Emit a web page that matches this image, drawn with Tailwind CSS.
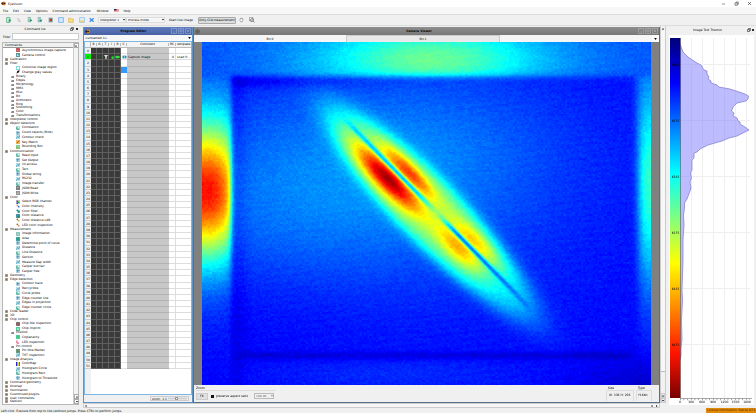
<!DOCTYPE html>
<html lang="en">
<head>
<meta charset="utf-8">
<title>EyeVision</title>
<script src="https://cdn.jsdelivr.net/npm/@tailwindcss/browser@4"></script>
</head>
<body class="h-screen overflow-hidden flex flex-col bg-[#f0f0f0] text-black text-[3px] leading-[4px] font-['DejaVu_Sans',sans-serif] whitespace-nowrap cursor-default">

<header class="shrink-0">
  <div class="h-[7px] bg-white flex items-center px-[1px] gap-[2px]">
    <svg class="w-[5px] h-[5px]" viewBox="0 0 10 10"><ellipse cx="6" cy="5" rx="4" ry="4" fill="#f08a1c"/><circle cx="3" cy="5" r="2.4" fill="#5a2a10"/><circle cx="7" cy="5" r="1.5" fill="#222"/></svg>
    <h1>EyeVision</h1>
    <div class="ml-auto flex gap-[8px] pr-[3px]">
      <button aria-label="Minimize"><svg class="w-[5px] h-[5px]" viewBox="0 0 5 5"><path d="M1 3h3" stroke="#555" stroke-width=".6"/></svg></button>
      <button aria-label="Restore"><svg class="w-[5px] h-[5px]" viewBox="0 0 5 5" fill="none" stroke="#444" stroke-width=".6"><path d="M1 2h2.300v2.300H1zM2 2V1h2.300v2.300H3.300"/></svg></button>
      <button aria-label="Close"><svg class="w-[5px] h-[5px]" viewBox="0 0 5 5"><path d="M1 1l3 3M4 1L1 4" stroke="#333" stroke-width=".6"/></svg></button>
    </div>
  </div>
  <nav class="h-[7px] bg-[#f7f7f7] flex items-center pl-[3px] gap-[5px]">
    <button>File</button><button>Edit</button><button>View</button><button>Options</button><button>Command administration</button><button class="pl-[1px]">Window</button>
    <button aria-label="Language"><svg class="w-[5px] h-[3px]" viewBox="0 0 10 6"><path fill="#fff" d="M0 0h10v6H0z"/><path d="M0 .5h10M0 2.500h10M0 4.500h10" stroke="#d22"/><path fill="#225" d="M0 0h5v3H0z"/></svg></button>
    <button>Help</button>
  </nav>
  <div class="h-[12px] border-y border-[#dcdcdc] bg-[#f0f0f0] flex items-center pl-[6px]">
    <div id="tools" class="flex w-[91px] justify-between pr-[2px]"></div>
    <div class="relative ml-[1px]">
      <select aria-label="Interpreter" class="appearance-none block w-[28px] h-[6px] px-[1px] bg-[#f6f6f6] border border-[#ddd] leading-[3px]"><option>Interpreter 1</option></select>
      <svg class="absolute right-[1px] top-[2px] w-[2px] h-[2px] pointer-events-none" viewBox="0 0 4 4"><path d="M0 0h4L2 3z"/></svg>
    </div>
    <div class="relative">
      <select aria-label="Mode" class="appearance-none block w-[39px] h-[6px] px-[1px] bg-[#f6f6f6] border border-[#ddd] leading-[3px]"><option>Process mode</option></select>
      <svg class="absolute right-[1px] top-[2px] w-[2px] h-[2px] pointer-events-none" viewBox="0 0 4 4"><path d="M0 0h4L2 3z"/></svg>
    </div>
    <button class="ml-[3px] w-[26px]">Start live image</button>
    <button class="ml-[4px] w-[38px] h-[7px] leading-[4px] bg-[#dedede] border border-[#aaa] rounded-[1px]">Only CLK-measurement</button>
    <button aria-label="Pan" class="ml-[3px]"><svg class="w-[5px] h-[6px]" viewBox="0 0 5 6"><path d="M1 4V2l.6-.6.4.6.3-1 .6.2.2.8.6-.4V4L3 5H2z" fill="#fff" stroke="#666" stroke-width=".5"/></svg></button>
    <button aria-label="Zoom region" class="ml-[5px]"><svg class="w-[6px] h-[6px]" viewBox="0 0 6 6" fill="none" stroke="#555" stroke-width=".6"><rect x=".5" y=".5" width="3.500" height="3.500" stroke-dasharray=".8 .5"/><circle cx="3" cy="3" r="1.500"/><path d="M4 4l1.600 1.600"/></svg></button>
  </div>
</header>

<main class="flex-1 min-h-0 flex">
  <!-- Command list dock -->
  <aside class="w-[83px] shrink-0 flex flex-col pr-[4px]">
    <div class="h-[6px] flex items-center">
      <h2 class="flex-1 text-center">Command list</h2>
      <button aria-label="Float"><svg class="w-[4px] h-[4px]" viewBox="0 0 4 4"><path d="M.5 1.500h2v2h-2zM1.500 1.500v-1h2v2h-1" fill="none" stroke="#222" stroke-width=".6"/></svg></button>
      <button aria-label="Close list" class="ml-[1px]"><svg class="w-[4px] h-[4px]" viewBox="0 0 4 4"><path d="M1 1l2 2M3 1L1 3" stroke="#000" stroke-width=".8"/></svg></button>
    </div>
    <div class="flex items-center h-[9px] pl-[3px]">
      <label for="filter" class="w-[9px]">Filter</label>
      <input id="filter" class="flex-1 min-w-0 h-[7px] bg-white border border-[#ccc]">
    </div>
    <div class="flex-1 min-h-0 flex mt-[1px] mb-[3px] ml-[2px] border border-[#b8b8b8] bg-white">
      <div class="flex-1 min-w-0 flex flex-col">
        <div class="h-[5px] shrink-0 bg-[#f0f0f0] border-b border-[#999] pl-[2px] leading-[4px]">Commands</div>
        <ul id="tree" class="flex-1 min-h-0 flex flex-col leading-[3px]"></ul>
      </div>
      <div class="w-[5px] bg-[#f3f3f3] border-l border-[#ccc] flex flex-col justify-between items-center">
        <button aria-label="Scroll list up" class="w-[5px] h-[5px] border border-[#aaa] bg-white grid place-items-center"><svg class="w-[2px] h-[2px]" viewBox="0 0 4 4"><path d="M0 3h4L2 0z"/></svg></button>
        <div class="w-full">
          <button aria-label="Scroll list back" class="w-[5px] h-[5px] border border-[#aaa] bg-white grid place-items-center"><svg class="w-[2px] h-[2px]" viewBox="0 0 4 4"><path d="M0 3h4L2 0z"/></svg></button>
          <button aria-label="Scroll list down" class="w-[5px] h-[5px] border border-[#aaa] bg-white grid place-items-center"><svg class="w-[2px] h-[2px]" viewBox="0 0 4 4"><path d="M0 0h4L2 3z"/></svg></button>
        </div>
      </div>
    </div>
  </aside>

  <!-- Window area with its scroll bars -->
  <div class="flex-1 min-w-0 flex flex-col">
    <div class="flex-1 min-h-0 flex">
      <div class="flex-1 min-w-0 flex pt-[1px]">
        <!-- Program editor -->
        <section class="w-[110px] shrink-0 flex flex-col border-x border-b border-[#5e93c4] bg-[#f0f0f0]">
          <div class="h-[8px] shrink-0 bg-linear-to-b from-[#5f7cbc] to-[#4763a6] flex items-center pl-[1px] pr-[1px]">
            <svg class="w-[5px] h-[5px]" viewBox="0 0 10 10"><ellipse cx="6" cy="5" rx="4" ry="4" fill="#f08a1c"/><circle cx="3" cy="5" r="2.400" fill="#222"/><circle cx="7" cy="5" r="1.500" fill="#222"/></svg>
            <h2 class="flex-1 text-center font-bold pl-[6px]">Program Editor</h2>
            <div class="flex gap-[1px]">
              <button aria-label="Minimize editor"><svg class="w-[6px] h-[6px]" viewBox="0 0 6 6" fill="none" stroke="#a9b9dd" stroke-width=".5"><path d="M.5 .5h5v5h-5zM2 4h2"/></svg></button>
              <button aria-label="Maximize editor"><svg class="w-[6px] h-[6px]" viewBox="0 0 6 6" fill="none" stroke="#a9b9dd" stroke-width=".5"><path d="M.5 .5h5v5h-5zM2 2h2v2H2z"/></svg></button>
              <button aria-label="Close editor"><svg class="w-[6px] h-[6px]" viewBox="0 0 6 6" fill="none" stroke="#a9b9dd" stroke-width=".5"><path d="M.5 .5h5v5h-5zM2 2l2 2M4 2L2 4"/></svg></button>
            </div>
          </div>
          <div class="h-[6px] shrink-0 relative bg-[#f8f8f8]">
            <select aria-label="Program" class="appearance-none block w-full h-[6px] pl-[1px]"><option>&lt;unnamed 1&gt;</option></select>
            <svg class="absolute right-[1px] top-[2px] w-[3px] h-[2px] pointer-events-none" viewBox="0 0 4 3"><path d="M0 0h4L2 3z"/></svg>
          </div>
          <div class="flex-1 min-h-0 flex flex-col bg-white border border-[#7db6e2]">
            <table class="w-full grow-[329] basis-0 min-h-0 leading-[3px] flex flex-col">
              <thead class="block h-[6px] shrink-0 bg-[#f4f4f4]"><tr class="flex h-full items-center text-center divide-x divide-[#bbb] border-b border-[#bbb]">
                <th class="w-[6px] h-full"></th><th class="w-[6px] font-normal">B</th><th class="w-[6px] font-normal">G</th><th class="w-[6px] font-normal">T</th><th class="w-[6px] font-normal">I</th><th class="w-[6px] font-normal">R</th><th class="w-[6px] font-normal">C</th><th class="w-[42px] font-normal">Comment</th><th class="w-[7px] font-normal">RC</th><th class="flex-1 min-w-0 overflow-hidden font-normal">Template</th>
              </tr></thead>
              <tbody id="rows" class="flex-1 min-h-0 flex flex-col"></tbody>
            </table>
            <div class="grow-[25] basis-0 flex"><div class="w-[6px] bg-[#f0f0f0]"></div></div>
          </div>
          <div class="h-[7px] shrink-0 flex items-center justify-end pr-[3px]">
            <div class="flex items-center h-[5px] border border-[#ccc] px-[1px] gap-[1px]">
              <label for="zoomr">zoom: 1:1</label>
              <input id="zoomr" type="range" class="appearance-none w-[19px] h-[3px] bg-linear-to-b from-[#f0f0f0] via-[#ccc] to-[#f0f0f0] [&::-webkit-slider-thumb]:appearance-none [&::-webkit-slider-thumb]:w-[3px] [&::-webkit-slider-thumb]:h-[3px] [&::-webkit-slider-thumb]:bg-white [&::-webkit-slider-thumb]:border [&::-webkit-slider-thumb]:border-[#999]" value="45">
            </div>
          </div>
        </section>

        <!-- Camera viewer -->
        <section class="flex-1 min-w-0 flex flex-col border-x border-b border-[#54708e] bg-[#f0f0f0]">
          <div class="h-[8px] shrink-0 bg-linear-to-b from-[#8e8e8e] to-[#787878] flex items-center px-[1px]">
            <svg class="w-[5px] h-[5px]" viewBox="0 0 5 5" fill="none" stroke="#444" stroke-width=".6"><rect x=".8" y=".8" width="3.400" height="3.400" rx="1"/><circle cx="2.500" cy="2.500" r=".7"/></svg>
            <h2 class="flex-1 text-center font-bold">Camera Viewer</h2>
            <div class="flex gap-[1px]">
              <button aria-label="Minimize viewer"><svg class="w-[6px] h-[6px]" viewBox="0 0 6 6" fill="none" stroke="#bbb" stroke-width=".5"><path d="M.5 .5h5v5h-5zM2 4h2"/></svg></button>
              <button aria-label="Maximize viewer"><svg class="w-[6px] h-[6px]" viewBox="0 0 6 6" fill="none" stroke="#bbb" stroke-width=".5"><path d="M.5 .5h5v5h-5zM2 2h2v2H2z"/></svg></button>
              <button aria-label="Close viewer"><svg class="w-[6px] h-[6px]" viewBox="0 0 6 6" fill="none" stroke="#bbb" stroke-width=".5"><path d="M.5 .5h5v5h-5zM2 2l2 2M4 2L2 4"/></svg></button>
            </div>
          </div>
          <div class="h-[7px] shrink-0 flex bg-[#f6f6f6] text-center leading-[6px]">
            <button class="flex-1">Bit 0</button><button class="flex-1 bg-[#e9e9e9] border-x border-t border-[#ccc]">Bit 1</button><div class="flex-1"></div>
            <button aria-label="More tabs" class="w-[7px] grid place-items-center bg-white"><svg class="w-[3px] h-[2px]" viewBox="0 0 4 3"><path d="M0 0h4L2 3z"/></svg></button>
          </div>
          <div class="flex-1 min-h-0 bg-[#808080] px-[8px] flex"><canvas id="heat" width="450" height="343" class="block flex-1 min-w-0 w-full h-full" role="img" aria-label="Thermal image"></canvas></div>
          <div class="h-[17px] shrink-0 flex justify-between px-[2px] pt-[1px]">
            <fieldset class="w-[80px]"><legend class="leading-[4px]">Zoom</legend>
              <div class="flex items-center border-t border-[#ddd] h-[11px]">
                <button class="w-[12px] h-[7px] bg-[#e0e0e0] border border-[#ccc] leading-[4px]">Fit</button>
                <input id="par" type="checkbox" checked class="appearance-none ml-[3px] w-[3px] h-[3px] bg-[#111]">
                <label for="par" class="ml-[2px] w-[38px]">preserve aspect ratio</label>
                <div class="relative">
                  <select aria-label="Zoom factor" class="appearance-none block w-[20px] h-[6px] border border-[#bbb] px-[1px] text-[#666] leading-[3px]"><option>100.00</option></select>
                  <svg class="absolute right-[1px] top-[2px] w-[2px] h-[2px] pointer-events-none" viewBox="0 0 4 4"><path d="M0 0h4L2 3z" fill="#777"/></svg>
                </div>
              </div>
            </fieldset>
            <div class="flex pr-[5px] gap-[2px]">
              <dl class="w-[28px]"><dt class="pl-[2px]">Size</dt><dd class="border-x border-t border-[#ddd] h-[11px] leading-[9px] pl-[2px]">W: 336 H: 256</dd></dl>
              <dl class="w-[16px]"><dt class="pl-[2px]">Type</dt><dd class="border-x border-t border-[#ddd] h-[11px] leading-[9px] pl-[1px]">Y16bit</dd></dl>
            </div>
          </div>
        </section>
      </div>
      <div class="w-[6px] shrink-0 flex flex-col items-center bg-[#f2f2f2] border-x border-[#ccc]">
        <button aria-label="Scroll up" class="w-[5px] h-[5px] grid place-items-center"><svg class="w-[2px] h-[2px]" viewBox="0 0 4 4"><path d="M0 3h4L2 0z"/></svg></button>
        <div class="w-[4px] flex-1 bg-[#f7f7f7] mb-[21px] border-b border-[#bbb]"></div>
        <button aria-label="Scroll back" class="w-[4px] h-[5px] border border-[#ccc] grid place-items-center"><svg class="w-[2px] h-[2px]" viewBox="0 0 4 4"><path d="M0 3h4L2 0z"/></svg></button>
        <button aria-label="Scroll down" class="w-[4px] h-[5px] border border-[#ccc] grid place-items-center"><svg class="w-[2px] h-[2px]" viewBox="0 0 4 4"><path d="M0 0h4L2 3z"/></svg></button>
      </div>
    </div>
    <div class="h-[5px] shrink-0 flex items-center mr-[6px] border border-[#ccc] bg-[#f7f7f7] px-[1px]">
      <button aria-label="Scroll left" class="h-[3px]"><svg class="w-[2px] h-[2px]" viewBox="0 0 4 4"><path d="M3 0v4L0 2z"/></svg></button>
      <div class="flex-1"></div>
      <button aria-label="Scroll further left" class="h-[3px] mr-[3px]"><svg class="w-[2px] h-[2px]" viewBox="0 0 4 4"><path d="M3 0v4L0 2z"/></svg></button>
      <button aria-label="Scroll right" class="h-[3px]"><svg class="w-[2px] h-[2px]" viewBox="0 0 4 4"><path d="M0 0v4l3-2z"/></svg></button>
    </div>
  </div>

  <!-- Image tool dock -->
  <aside class="w-[90px] shrink-0 flex flex-col pl-[2px]">
    <div class="h-[6px] mt-[1px] flex items-center pr-[1px]">
      <h2 class="flex-1 text-center">Image Tool Thermo</h2>
      <button aria-label="Float tool"><svg class="w-[4px] h-[4px]" viewBox="0 0 4 4"><path d="M.5 1.500h2v2h-2zM1.500 1.500v-1h2v2h-1" fill="none" stroke="#222" stroke-width=".6"/></svg></button>
      <button aria-label="Close tool"><svg class="w-[4px] h-[4px]" viewBox="0 0 4 4"><path d="M1 1l2 2M3 1L1 3" stroke="#000" stroke-width=".8"/></svg></button>
    </div>
    <svg id="hist" class="flex-1 min-h-0 w-full" viewBox="668 33 88 375" preserveAspectRatio="none" font-size="3" font-family="DejaVu Sans, sans-serif">
      <defs><linearGradient id="jet" x1="0" y1="0" x2="0" y2="1"><stop offset="0" stop-color="#00007a"/><stop offset=".125" stop-color="#0000ff"/><stop offset=".375" stop-color="#00ffff"/><stop offset=".625" stop-color="#ffff00"/><stop offset=".875" stop-color="#ff1400"/><stop offset="1" stop-color="#780000"/></linearGradient></defs>
      <path d="M669 35h85v370h-85z" fill="#fff"/>
      <path d="M691.500 38v360M702.500 38v360M713.500 38v360M724.500 38v360M735.500 38v360M746.500 38v360M680 64.500h70M680 120.500h70M680 176.500h70M680 232.500h70M680 288.500h70M680 344.500h70" stroke="#efefef" fill="none"/>
      <path d="M680 44L683 52 688 57 697 63 701 65 704 70 707 71 707 74 709 77 708 79 711 81 711 83 717 85 719 87 730 89 745 94 748.500 96 748 99 746 101 737 103 733 107 731.500 111 734 113 733 116 737 118 738 121 740 122 740 124 745 127 749 130 743 133 737 136 729 138 722 141 708 145 700 149 697 152 694 153 694 158 692 160 692 170 690.500 173 691.500 178 690 182 691 188 690 191 687 199 684.500 203 684.500 208 683.500 215 684 225 683 240 683 260 682 290 682.500 300 681.500 320 682 340 681 348 681 356 680 360z" fill="#bcbcff" stroke="#7d78c8" stroke-width=".7"/>
      <path d="M691.500 66v92M702.500 70v75M713.500 85v57M724.500 89v49M735.500 92v12M735.500 120v15M680 64.500h20M680 120.500h58M680 176.500h11" stroke="#b0b0f2" fill="none" stroke-width=".7"/>
      <rect x="670" y="38" width="10.500" height="360" fill="url(#jet)"/>
      <path d="M680.500 38v360M680 398.500h72" stroke="#555" stroke-width=".5"/>
      <path d="M680 399.500h70" stroke="#555" stroke-width="1.500" stroke-dasharray=".5 3.170"/>
      <g fill="#000" text-anchor="middle"><text x="675.500" y="66">6225</text><text x="675.500" y="122">6275</text><text x="675.500" y="178">6325</text><text x="675.500" y="234">6375</text><text x="675.500" y="290">6425</text><text x="675.500" y="346">6475</text>
      <text x="680" y="403">0</text><text x="691" y="403">300</text><text x="702" y="403">600</text><text x="713" y="403">900</text><text x="724.500" y="403">1200</text><text x="735.500" y="403">1500</text><text x="747" y="403">1800</text></g>
    </svg>
  </aside>
</main>

<footer class="h-[5px] shrink-0 flex items-center justify-between">
  <p class="pl-[1px]">Left click: Execute from top to line (without jumps. Press CTRL to perform jumps.</p>
  <p class="bg-[#e08a0a] w-[50px] h-[5px] pl-[1px] text-[#5a3000] overflow-hidden">License information: Status 07.12</p>
</footer>

<script>
const svg = (cls, box, body) => `<svg class="${cls}" viewBox="0 0 ${box} ${box}">${body}</svg>`;

// Toolbar
const tools = [
  ['Start', '<path d="M1 1h5v7H1z" fill="#dff5e8" stroke="#2c9a6a"/><path d="M4 3l4 2-4 3z" fill="#18a05a"/>'],
  ['Stop', '<path d="M2 2l5 5" stroke="#c8c8c8" stroke-width="2"/><path d="M2 6h4" stroke="#d8c0c0"/>'],
  ['Step into', '<path d="M1 1h5M1 3h5M1 5h5M1 7h5" stroke="#4b9a7e"/><path d="M5 3l3 2-3 2z" fill="#0d8a56"/>'],
  ['Step over', '<path d="M1 1h5M1 3h5M1 5h5M1 7h5" stroke="#4b8a9e"/><path d="M4 4h4l-2 4z" fill="#0d9a56"/>'],
  ['Break', '<path d="M1 1h6v7H1z" fill="#7a9c94"/><path d="M3 3h3v3H3z" fill="#b33"/>'],
  ['New', '<path d="M1 1h7v7H1z" fill="#d8ecff" stroke="#4c9ae8"/>'],
  ['Open', '<path d="M1 2h3l1 1h3v5H1z" fill="#f7e08a" stroke="#d8b040"/>'],
  ['Save', '<path d="M1 1h7v7H1z" fill="#e8f2fc" stroke="#78b0e8"/><path d="M2 5h5v3H2z" fill="#f0d060"/>'],
  ['Settings', '<path d="M1 2l6 5M7 2L1 7" stroke="#3a8de8" stroke-width="2"/>']];
document.getElementById('tools').innerHTML = tools.map(([n, b]) => `<button aria-label="${n}">${svg('w-[6px] h-[6px]', 9, b)}</button>`).join('');

// Command tree: "=" category, "+" sub-category, otherwise a command
const tree = 'Asynchronous image capture|Camera control|=Calibration|=Filter|Convolve image region|Change gray values|+Binary|+Edges|+Morphology|+MMX|+Misc|+Bit|+Arithmetic|+Ring|+Smoothing|+Color|+Transformations|=Interpreter control|=Object detection|Correlation|Count objects (Blob)|Contour check|Key Match|Bounding Box|=Communication|Read input|Set Output|I/o access|Text|Global string|RS232|Image transfer|JSON Read|JSON Write|=Color|Select RGB channel|Color intensity|Color filter|Color distance|Color distance LAB|LED color inspection|=Measurement|Image information|Area|Determine point of curve|Distance|Line Distance|Section|Measure Gap width|Caliper burr/air|Caliper free|=Geometry|=Edge detection|Contour trace|Rect probe|Circle probe|Edge counter line|Edges in projection|Edge counter circle|=Code reader|=3D|=Chip control|Chip Die inspection|Chip imprint|+Position|Coplanarity|LED inspection|+Pin control|Pin One Marker|THT inspection|=Image Analysis|ColorMap|Histogram Circle|Histogram Rect|Histogram to Threshold|=Command geometry|=Overlap|=Illumination|=Customised plugins|=User commands|=Statistic'.split('|');
const box = (a, b) => `<path d="M.5 .5h8v8h-8z" fill="${a}" stroke="${b}"/>`;
const art = {
  'Asynchronous image capture': box('#c33', '#844') + '<path d="M2 5h5" stroke="#fff"/>',
  'Camera control': box('#2a8a86', '#577') + '<circle cx="4" cy="5" r="2" fill="#def"/>',
  'Convolve image region': box('#fff', '#3bc3c8') + '<path d="M1 1h7v7H1z" fill="none" stroke="#3bc3c8"/>',
  'Change gray values': '<path d="M1 8l2-6 5-2-1 5z" fill="#111"/>',
  'Key Match': box('#e8c030', '#d84') + '<path d="M2 7l5-5" stroke="#d33" stroke-width="2"/>',
  'Bounding Box': box('#8d8', '#2a6') + '<path d="M1 5h4v3H1z" fill="#d83"/>',
  'Select RGB channel': box('#fff', '#46c') + '<circle cx="3" cy="3" r="2" fill="#d22"/><circle cx="6" cy="5" r="2" fill="#2b3"/><circle cx="3" cy="7" r="2" fill="#23d"/>',
  'Color intensity': '<circle cx="3" cy="3" r="2" fill="#e90"/><circle cx="6" cy="6" r="2" fill="#36c"/>',
  'Color filter': '<circle cx="3" cy="3" r="2" fill="#17a"/><circle cx="6" cy="6" r="3" fill="#2a8"/>',
  'Color distance': box('#2b9bc0', '#256') + '<circle cx="6" cy="6" r="2" fill="#285"/>',
  'Color distance LAB': '<circle cx="3" cy="3" r="2" fill="#a63"/><circle cx="6" cy="6" r="2" fill="#ca5"/>',
  'LED color inspection': '<circle cx="3" cy="3" r="2" fill="#a63"/><circle cx="6" cy="6" r="2" fill="#d95"/>',
  'Area': box('#1fa58a', '#178'), 'Image information': box('#9cd0c8', '#598'),
  'Chip Die inspection': box('#444', '#a66') + '<path d="M3 3h3v3H3z" fill="#e77"/>',
  'Chip imprint': box('#35d080', '#2a9') + '<path d="M3 3h3v3H3z" fill="#fff"/>',
  'Coplanarity': box('#35d080', '#2a9'), 'LED inspection': '<path d="M2 1v6M2 7h5" stroke="#c36" stroke-width="2"/>',
  'Pin One Marker': box('#35b070', '#555') + '<path d="M3 3h3v3H3z" fill="#c55"/>',
  'ColorMap': '<path d="M0 0h3v9H0z" fill="#22d"/><path d="M3 0h2v9H3z" fill="#2d4"/><path d="M5 0h2v9H5z" fill="#ed2"/><path d="M7 0h2v9H7z" fill="#e22"/>',
  'JSON Read': box('#777', '#444') + '<path d="M2 4h5" stroke="#fff"/>', 'JSON Write': box('#999', '#555') + '<path d="M2 5h5" stroke="#fff"/>'
};
const generic = [
  box('#dff2f7', '#6cb8c8') + '<path d="M1 8l3-5 2 3 2-5" stroke="#2a8fb8" fill="none" stroke-width="1.800"/>',
  box('#d4f0e4', '#6bb') + '<path d="M2 2v5h5" stroke="#1d9a78" fill="none" stroke-width="2"/>',
  box('#e0f0fa', '#7ac') + '<path d="M1 4h7M4 1v7" stroke="#2b86a8" fill="none" stroke-width="1.800"/>'];
document.getElementById('tree').innerHTML = tree.map((t, i) => {
  if (t[0] === '=') return `<li class="grow-[5] basis-0 min-h-0 flex items-center pl-[2px] gap-[2px]">${svg('w-[3px] h-[3px]', 6, '<path d="M0 0h6v6H0z" fill="#b5a48c"/><path d="M1 3h4M3 1v4" stroke="#665"/>')}<span>${t.slice(1)}</span></li>`;
  if (t[0] === '+') return `<li class="grow-[5] basis-0 min-h-0 flex items-center pl-[8px] gap-[2px]">${svg('w-[3px] h-[3px]', 6, '<path d="M1 2h5v3H1z" fill="#888"/><path d="M0 5h6" stroke="#555"/>')}<span>${t.slice(1)}</span></li>`;
  return `<li class="grow-[6] basis-0 min-h-0 flex items-center pl-[13px] gap-[2px]">${svg('w-[4px] h-[4px]', 9, art[t] || generic[i % 3])}<span>${t}</span></li>`;
}).join('');

// Program rows
document.getElementById('rows').innerHTML = Array.from({ length: 52 }, (_, i) => {
  const d = 'bg-[#3a3a3a] border-r border-b border-[#606060] grid place-items-center';
  const c = i === 1 ? [svg('w-[3px] h-[3px]', 6, '<circle cx="3" cy="3" r="2" fill="#522"/>'), svg('w-[3px] h-[3px]', 6, '<circle cx="3" cy="3" r="2" fill="#161"/>'), svg('w-[4px] h-[4px]', 6, '<path d="M0 0h6L4 3v3H2V3z" fill="#ddd"/>'), svg('w-[4px] h-[4px]', 6, '<circle cx="4" cy="4" r="2" fill="#1d2"/>'), svg('w-[5px] h-[4px]', 6, '<rect y="1" width="6" height="4" rx="1" fill="#3d4"/>')] : ['', '', '', '', ''];
  return `<tr class="flex-1 min-h-0 flex">
    <td class="${i === 1 ? 'w-[6px] bg-[#00f000] text-center border-b border-[#ccc] leading-[6px]' : 'w-[6px] bg-[#f0f0f0] text-center border-b border-[#ccc] leading-[6px]'}">${i}</td>
    <td class="w-[6px] ${d}">${c[0]}</td><td class="w-[6px] ${d}">${c[1]}</td><td class="w-[6px] ${d}">${c[2]}</td><td class="w-[6px] ${d}">${c[3]}</td><td class="w-[6px] ${d}">${c[4]}</td>
    <td class="${i === 3 ? 'w-[6px] bg-[#3399ff]' : 'w-[6px] border-b border-[#e4e4e4] grid place-items-center'}">${i === 1 ? svg('w-[5px] h-[4px]', 6, '<path d="M0 1h6v4H0z" fill="#27889a"/><circle cx="3" cy="3" r="1" fill="#cef"/>') : ''}</td>
    <td class="w-[42px] bg-[#c8c8c8] border-b border-[#b2b2b2] pl-[1px] leading-[6px]">${i === 1 ? 'Capture image' : ''}</td>
    <td class="w-[7px] border-b border-r border-[#ddd] text-right pr-[1px] leading-[6px]">${i === 1 ? '0' : ''}</td>
    <td class="flex-1 min-w-0 overflow-hidden border-b border-[#ddd] pl-[1px] leading-[6px]">${i === 1 ? 'Load fr...' : ''}</td></tr>`;
}).join('');

// Thermal image: scalar field through the jet colour map
const cv = document.getElementById('heat'), cx = cv.getContext('2d'), W = 450, H = 343;
const g = (x, s) => Math.exp(-(x / s) * (x / s)), sg = x => 1 / (1 + Math.exp(-x));
let seed = 7; const rnd = () => (seed = (seed * 16807) % 2147483647) / 2147483647;
const noise = Array.from({ length: 226 * 173 }, () => rnd() + rnd() - 1);
const ch = x => Math.max(0, Math.min(255, 255 * x));
const im = cx.createImageData(W, H);
for (let y = 0; y < H; y++) for (let x = 0; x < W; x++) {
  const s = (x - 148) * .7 + (y - 82) * .714, t = (x - 148) * .714 - (y - 82) * .7;
  const L = sg((29 - x) / 1.5), R = sg((x - 433) / 2), T = sg((34 - y) / 1.8);
  let inner = .13 + .12 * g(x - 130, 200) * g(y - 155, 105) + .055 * g(x - 230, 150) * g(y - 90, 80);
  inner -= .06 * g(y - 37, 8) * g(x - 40, 110) + .03 * g(x - 32, 12);
  inner -= .045 * g(y - 313, 4) * sg((x - 38) / 4) * sg((430 - x) / 6);
  inner -= .02 * g(y - 265, 60) * g(x - 60, 130);
  inner += .03 * g(y - 332, 14) * g(x - 190, 130);
  const top = .19 + .04 * g(x - 230, 240) + .25 * g(x - 228, 112) * g(y - 17, 34);
  const left = .12 + .1 * g(y - 110, 140) + .65 * g(y - 150, 68) * (1 - .32 * Math.pow(Math.max(0, x - 5) / 24, 2));
  const right = .12 + .08 * g(y - 80, 150) + .25 * g(y - 150, 100) * sg((x - 438) / 3);
  let v = inner * (1 - L) * (1 - R) + left * L + right * R;
  v = v * (1 - T) + top * T;
  const q = Math.sqrt(Math.pow((s - 122) / 140, 2) + Math.pow((t + 4) / 31, 2));
  v += (.25 - .03 * sg((s - 200) / 12)) * sg((1 - q) * 9);
  v += .44 * g(s - 66, 44) * g(t + 11, t > -11 ? 10 : 12) + .29 * g(s - 76, 36) * g(t - 9, 8);
  v += .25 * g(s - 165, 32) * g(t + 9, 12) + .19 * g(s - 172, 34) * g(t - 9, 9);
  const k = Math.min(1, 1.15 * g(t, 2.3)) * sg((s + 6) / 5) * sg((262 - s) / 4) * (1 - .85 * g(s - 124, 16));
  v += (Math.min(v, s < 124 ? .33 : .25) - v) * k;
  v += .018 * noise[(y >> 1) * 226 + (x >> 1)] + .014 * (rnd() - .5) + .003 * Math.sin(y * .9 + x * .1);
  v -= .05 * g(x - 450, 80) * g(y - 343, 30);
  v = Math.max(.02, Math.min(1, v));
  const o = (y * W + x) * 4;
  im.data[o] = ch(1.5 - Math.abs(4 * v - 3)); im.data[o + 1] = ch(1.5 - Math.abs(4 * v - 2)); im.data[o + 2] = ch(1.5 - Math.abs(4 * v - 1)); im.data[o + 3] = 255;
}
cx.putImageData(im, 0, 0);
</script>
</body>
</html>
